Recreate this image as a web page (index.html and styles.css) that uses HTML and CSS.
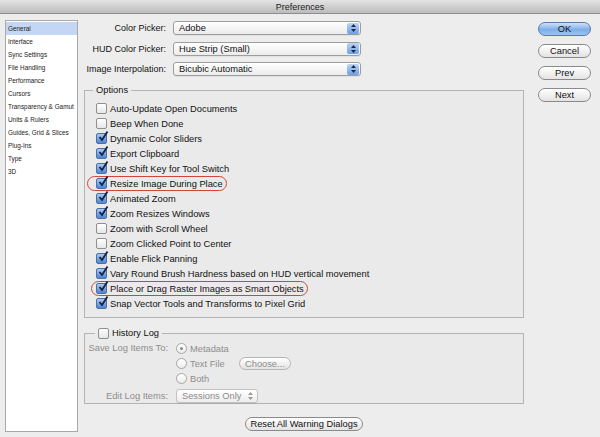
FILE: index.html
```html
<!DOCTYPE html>
<html lang="en">
<head>
  <meta charset="UTF-8" />
  <title>Preferences</title>
  <link rel="stylesheet" href="styles.css">
</head>
<body>
  <div class="titlebar">Preferences</div>

  <div class="window">
    <!-- category list -->
    <ul class="sidebar">
      <li class="selected">General</li>
      <li>Interface</li>
      <li>Sync Settings</li>
      <li>File Handling</li>
      <li>Performance</li>
      <li>Cursors</li>
      <li>Transparency &amp; Gamut</li>
      <li>Units &amp; Rulers</li>
      <li>Guides, Grid &amp; Slices</li>
      <li>Plug-Ins</li>
      <li>Type</li>
      <li>3D</li>
    </ul>

    <div class="main">
      <div class="pickers">
        <label>Color Picker:</label>
        <div class="select wide"><span>Adobe</span><i class="stepper"><svg width="7" height="10" viewBox="0 0 7 10"><path d="M3.5 1 L6 4 H1 Z M3.5 9 L6 6 H1 Z" fill="#1b2a4a"/></svg></i></div>
        <label>HUD Color Picker:</label>
        <div class="select wide"><span>Hue Strip (Small)</span><i class="stepper"><svg width="7" height="10" viewBox="0 0 7 10"><path d="M3.5 1 L6 4 H1 Z M3.5 9 L6 6 H1 Z" fill="#1b2a4a"/></svg></i></div>
        <label>Image Interpolation:</label>
        <div class="select wide"><span>Bicubic Automatic</span><i class="stepper"><svg width="7" height="10" viewBox="0 0 7 10"><path d="M3.5 1 L6 4 H1 Z M3.5 9 L6 6 H1 Z" fill="#1b2a4a"/></svg></i></div>
      </div>

      <fieldset class="group options">
        <legend>Options</legend>
        <div class="check"><span class="box"></span>Auto-Update Open Documents</div>
        <div class="check"><span class="box"></span>Beep When Done</div>
        <div class="check"><span class="box on"><svg width="12" height="12" viewBox="0 0 12 12"><path d="M2.5 6 L5 9 L10.5 0.5" fill="none" stroke="#14213d" stroke-width="1.8"/></svg></span>Dynamic Color Sliders</div>
        <div class="check"><span class="box on"><svg width="12" height="12" viewBox="0 0 12 12"><path d="M2.5 6 L5 9 L10.5 0.5" fill="none" stroke="#14213d" stroke-width="1.8"/></svg></span>Export Clipboard</div>
        <div class="check"><span class="box on"><svg width="12" height="12" viewBox="0 0 12 12"><path d="M2.5 6 L5 9 L10.5 0.5" fill="none" stroke="#14213d" stroke-width="1.8"/></svg></span>Use Shift Key for Tool Switch</div>
        <div class="check marked"><span class="box on"><svg width="12" height="12" viewBox="0 0 12 12"><path d="M2.5 6 L5 9 L10.5 0.5" fill="none" stroke="#14213d" stroke-width="1.8"/></svg></span>Resize Image During Place</div>
        <div class="check"><span class="box on"><svg width="12" height="12" viewBox="0 0 12 12"><path d="M2.5 6 L5 9 L10.5 0.5" fill="none" stroke="#14213d" stroke-width="1.8"/></svg></span>Animated Zoom</div>
        <div class="check"><span class="box on"><svg width="12" height="12" viewBox="0 0 12 12"><path d="M2.5 6 L5 9 L10.5 0.5" fill="none" stroke="#14213d" stroke-width="1.8"/></svg></span>Zoom Resizes Windows</div>
        <div class="check"><span class="box"></span>Zoom with Scroll Wheel</div>
        <div class="check"><span class="box"></span>Zoom Clicked Point to Center</div>
        <div class="check"><span class="box on"><svg width="12" height="12" viewBox="0 0 12 12"><path d="M2.5 6 L5 9 L10.5 0.5" fill="none" stroke="#14213d" stroke-width="1.8"/></svg></span>Enable Flick Panning</div>
        <div class="check"><span class="box on"><svg width="12" height="12" viewBox="0 0 12 12"><path d="M2.5 6 L5 9 L10.5 0.5" fill="none" stroke="#14213d" stroke-width="1.8"/></svg></span>Vary Round Brush Hardness based on HUD vertical movement</div>
        <div class="check marked tight"><span class="box on"><svg width="12" height="12" viewBox="0 0 12 12"><path d="M2.5 6 L5 9 L10.5 0.5" fill="none" stroke="#14213d" stroke-width="1.8"/></svg></span>Place or Drag Raster Images as Smart Objects</div>
        <div class="check"><span class="box on"><svg width="12" height="12" viewBox="0 0 12 12"><path d="M2.5 6 L5 9 L10.5 0.5" fill="none" stroke="#14213d" stroke-width="1.8"/></svg></span>Snap Vector Tools and Transforms to Pixel Grid</div>
      </fieldset>

      <fieldset class="group history">
        <legend><span class="box"></span>History Log</legend>
        <div class="log-grid">
          <label>Save Log Items To:</label>
          <div class="radios">
            <div class="radio"><span class="dot on"></span>Metadata</div>
            <div class="radio"><span class="dot"></span><span class="radio-text">Text File</span><button class="btn small" disabled>Choose...</button></div>
            <div class="radio"><span class="dot"></span>Both</div>
          </div>
          <label class="edit-label">Edit Log Items:</label>
          <div class="select narrow disabled"><span>Sessions Only</span><i class="stepper plain"><svg width="7" height="10" viewBox="0 0 7 10"><path d="M3.5 1 L6 4 H1 Z M3.5 9 L6 6 H1 Z" fill="#9a9a9a"/></svg></i></div>
        </div>
      </fieldset>

      <div class="reset-row">
        <button class="btn">Reset All Warning Dialogs</button>
      </div>
    </div>

    <div class="buttons">
      <button class="btn default">OK</button>
      <button class="btn">Cancel</button>
      <button class="btn">Prev</button>
      <button class="btn">Next</button>
    </div>
  </div>
</body>
</html>
```

FILE: styles.css
```css
body {
  margin: 0;
  width: 600px;
  height: 437px;
  overflow: hidden;
  background-color: #ededed;
  color: #111;
  font-family: "Liberation Sans", Arial, sans-serif;
  font-size: 9.3px;
}

.titlebar {
  height: 13px;
  line-height: 14px;
  text-align: center;
  font-size: 9px;
  color: #222;
  background: linear-gradient(#e4e4e4, #bcbcbc);
  border-bottom: 1px solid #8e8e8e;
}

.window {
  display: flex;
  align-items: flex-start;
}

/* left category list */
.sidebar {
  list-style: none;
  margin: 6px 0 0 5px;
  padding: 1px 0 0;
  width: 71px;
  height: 409px;
  background: #fff;
  border: 1px solid #a9a9a9;
  font-size: 6.4px;
}

.sidebar li {
  height: 13px;
  line-height: 13px;
  padding-left: 2px;
  color: #222;
  white-space: nowrap;
}

.sidebar li.selected {
  background: #c3d6f3;
}

.main {
  width: 440px;
  margin-left: 6px;
  padding-top: 7px;
  white-space: nowrap;
}

/* pickers at the top */
.pickers {
  display: grid;
  grid-template-columns: 82px 188px;
  column-gap: 7px;
  row-gap: 6.5px;
  align-items: center;
}

.pickers label {
  justify-self: end;
  font-size: 9px;
}

.select {
  height: 12px;
  display: flex;
  align-items: center;
  justify-content: space-between;
  padding: 0 1px 0 5px;
  border: 1px solid #9d9d9d;
  border-radius: 3px;
  background: linear-gradient(#ffffff, #ececec);
  box-shadow: 0 1px 0 rgba(0, 0, 0, 0.05);
}

.stepper {
  width: 12px;
  height: 11px;
  border-radius: 2px;
  display: flex;
  align-items: center;
  justify-content: center;
  background: linear-gradient(#bcd5f5, #6d9fe2);
}

.stepper.plain {
  background: none;
}

.select.narrow {
  width: 74px;
}

.select.disabled {
  color: #8d8d8d;
  border-color: #c2c2c2;
}

/* group boxes */
.group {
  margin: 0;
  border: 1px solid #b4b4b4;
  background: #eaeaea;
  padding: 0 0 0 11px;
}

.group legend {
  padding: 0 3px;
  margin-left: -3px;
  display: flex;
  align-items: center;
  gap: 3px;
  line-height: 13px;
}

.options {
  margin-top: 8px;
  height: 228px;
  padding-top: 4px;
}

.history {
  margin-top: 9px;
  height: 75px;
  padding-left: 0;
}

.history legend {
  margin-left: 10px;
}

.check {
  position: relative;
  display: flex;
  align-items: center;
  gap: 3px;
  height: 15px;
  width: max-content;
}

.box {
  width: 9px;
  height: 9px;
  flex-shrink: 0;
  border: 1px solid #8f8f8f;
  border-radius: 2px;
  background: linear-gradient(#ffffff, #e6e6e6);
  position: relative;
}

.box.on {
  border-color: #4d6fa6;
  background: linear-gradient(#a9c8f1, #4d86d8);
}

.box svg {
  position: absolute;
  left: 0;
  top: -3px;
}

/* red annotation rings */
.check.marked::before {
  content: "";
  position: absolute;
  left: -9px;
  right: -4px;
  top: 0;
  bottom: 0;
  border: 1.5px solid #d2463a;
  border-radius: 8px;
}

.check.marked.tight::before {
  left: -5px;
  right: -4px;
}

/* history log contents */
.log-grid {
  display: grid;
  grid-template-columns: 83px auto;
  column-gap: 8px;
  align-items: start;
  color: #8d8d8d;
  padding-top: 1px;
}

.log-grid label {
  justify-self: end;
  line-height: 15px;
}

.log-grid .edit-label {
  margin-top: 3px;
}

.log-grid .select {
  margin-top: 3px;
}

.radio {
  display: flex;
  align-items: center;
  gap: 3px;
  height: 15px;
}

.radio-text {
  width: 46px;
}

.dot {
  width: 9px;
  height: 9px;
  border: 1px solid #a6a6a6;
  border-radius: 50%;
  background: linear-gradient(#ffffff, #ececec);
  position: relative;
}

.dot.on::after {
  content: "";
  position: absolute;
  left: 3px;
  top: 3px;
  width: 3px;
  height: 3px;
  border-radius: 50%;
  background: #8a8a8a;
}

/* buttons */
.btn {
  font-family: inherit;
  font-size: 9.3px;
  color: #111;
  height: 14px;
  padding: 0 6px;
  line-height: 12px;
  white-space: nowrap;
  border: 1px solid #8a8a8a;
  border-radius: 7px;
  background: linear-gradient(#ffffff, #e3e3e3);
}

.btn.small {
  height: 13px;
  padding: 0 5px;
  color: #8d8d8d;
  border-color: #b4b4b4;
}

.btn.default {
  border-color: #5a7bb0;
  background: linear-gradient(#cfe1f8, #7eaee9 55%, #9cc3f2);
}

.reset-row {
  display: flex;
  justify-content: center;
  margin-top: 13px;
}

.reset-row .btn {
  min-width: 117px;
  padding: 0 4px;
}

.buttons {
  display: flex;
  flex-direction: column;
  gap: 8px;
  margin: 8px 0 0 14px;
}

.buttons .btn {
  width: 53px;
}
```
